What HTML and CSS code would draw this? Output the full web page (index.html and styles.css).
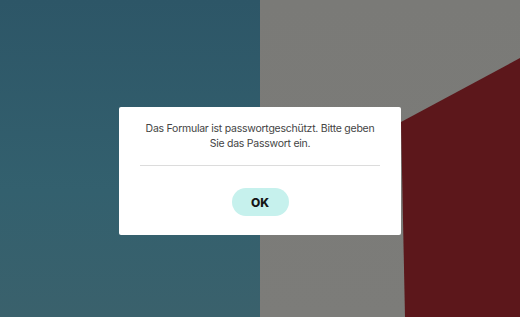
FILE: index.html
```html
<!DOCTYPE html>
<html lang="de">
<head>
<meta charset="utf-8">
<link rel="stylesheet" href="styles.css">
</head>
<body>
<div class="stage">
  <div class="wall-blue"></div>
  <div class="wall-gray"></div>
  <div class="wall-red"></div>
  <div class="overlay">
    <div class="dialog">
      <p class="message">Das Formular ist passwortgeschützt. Bitte geben Sie das Passwort ein.</p>
      <hr class="divider">
      <button class="ok">OK</button>
    </div>
  </div>
</div>
</body>
</html>
```
FILE: styles.css
```css
html, body {
  margin: 0;
  padding: 0;
  width: 520px;
  height: 317px;
  overflow: hidden;
}
.stage {
  position: relative;
  width: 520px;
  height: 317px;
  display: grid;
  grid-template-columns: 260px 260px;
}
.wall-blue {
  background: linear-gradient(180deg, #2d5667 0%, #33606e 60%, #3a616c 100%);
}
.wall-gray {
  background: linear-gradient(180deg, #7a7a77 0%, #7c7c79 100%);
}
.wall-red {
  position: absolute;
  inset: 0;
  background: #5c171b;
  clip-path: polygon(401px 122px, 520px 58px, 520px 317px, 405px 317px);
}
.overlay {
  position: absolute;
  inset: 0;
  display: flex;
  justify-content: center;
  align-items: flex-start;
  padding-top: 107px;
}
.dialog {
  width: 282px;
  height: 128px;
  box-sizing: border-box;
  background: #ffffff;
  border-radius: 2px;
  padding: 14px 21px 0;
  display: flex;
  flex-direction: column;
  align-items: center;
  font-family: "Inter", "Liberation Sans", sans-serif;
}
.message {
  margin: 0;
  width: 236px;
  font-size: 10.5px;
  line-height: 15px;
  letter-spacing: -0.25px;
  color: #444444;
  text-align: center;
}
.divider {
  align-self: stretch;
  border: 0;
  border-top: 1px solid #dcdcdc;
  margin: 14px 0 0;
}
.ok {
  margin-top: 22px;
  width: 57px;
  height: 28px;
  border: 0;
  border-radius: 14px;
  background: #c6f1ed;
  color: #151515;
  font-family: "Inter", "Liberation Sans", sans-serif;
  font-weight: 800;
  font-size: 12px;
  padding: 0;
}
```
